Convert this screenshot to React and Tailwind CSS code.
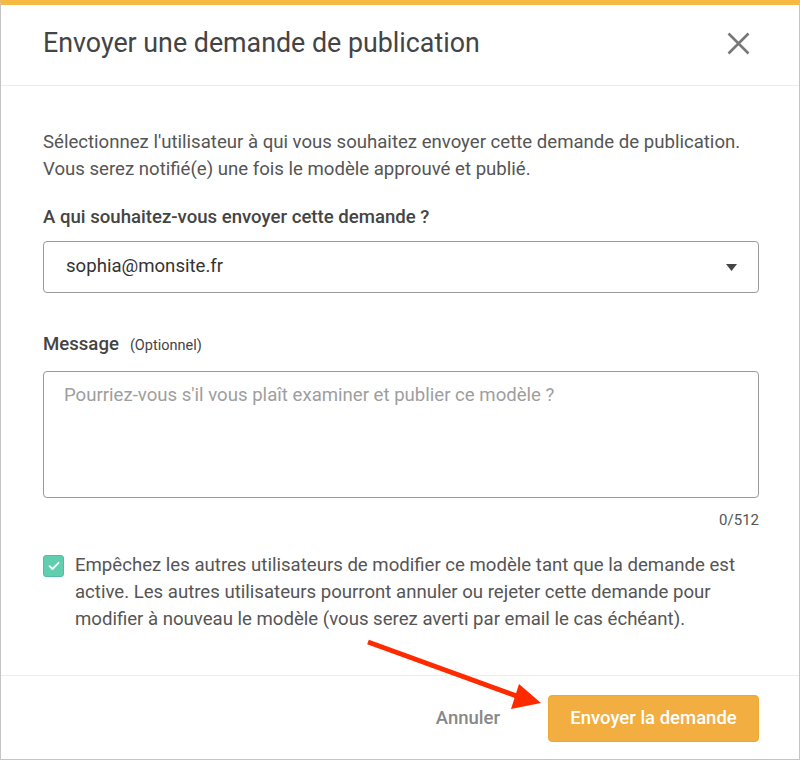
import { useState } from 'react'

export default function App() {
  const [locked, setLocked] = useState(true)
  const [message, setMessage] = useState('')

  return (
    <div className="relative w-[800px] h-[760px] bg-white border-x border-b border-[#c4c4c4] border-t-[5px] border-t-[#f6b942] font-['Roboto',sans-serif] flex flex-col">
      {/* Header */}
      <div className="h-[81px] shrink-0 flex items-center justify-between pl-[42px] pr-[49px] border-b border-[#ececec]">
        <h1 className="text-[26.8px] text-[#444] leading-none -mt-[4px]">Envoyer une demande de publication</h1>
        <button className="text-[#777] -mt-[4px]">
          <svg width="23" height="23" viewBox="0 0 23 23" fill="none" stroke="currentColor" strokeWidth="2.6">
            <path d="M1.5 1.5 L21.5 21.5 M21.5 1.5 L1.5 21.5" />
          </svg>
        </button>
      </div>

      {/* Body */}
      <div className="flex-1 px-[42px] pt-[43px] text-[18.6px]">
        <p className="text-[#555] leading-[27px]">
          Sélectionnez l'utilisateur à qui vous souhaitez envoyer cette demande de publication.
          <br />
          Vous serez notifié(e) une fois le modèle approuvé et publié.
        </p>

        <label className="block mt-[22px] leading-[24px] font-medium text-[#444]">
          A qui souhaitez-vous envoyer cette demande ?
        </label>
        <div className="mt-[12px] h-[52px] w-[716px] rounded-[4px] border border-[#9a9a9a] flex items-center justify-between pl-[22px] pr-[21px] text-[#333]">
          <span>sophia@monsite.fr</span>
          <svg width="11" height="7" viewBox="0 0 11 7" fill="#444">
            <path d="M0 0 H11 L5.5 7 Z" />
          </svg>
        </div>

        <div className="mt-[39px] flex items-baseline gap-[11px] leading-[24px]">
          <span className="font-medium text-[#444]">Message</span>
          <span className="text-[14.5px] text-[#444]">(Optionnel)</span>
        </div>
        <textarea
          value={message}
          onChange={(e) => setMessage(e.target.value)}
          placeholder="Pourriez-vous s'il vous plaît examiner et publier ce modèle ?"
          className="mt-[13px] block w-[716px] h-[127px] resize-none rounded-[4px] border border-[#9a9a9a] px-[20px] py-[11px] leading-[24px] text-[#333] placeholder-[#9e9e9e] outline-none"
        />
        <div className="w-[716px] text-right text-[15px] leading-[18px] mt-[13px] text-[#555]">{message.length}/512</div>

        <div className="mt-[23px] flex items-start gap-[11px]">
          <button
            onClick={() => setLocked(!locked)}
            className={`mt-[3px] shrink-0 w-[21px] h-[22px] rounded-[3px] flex items-center justify-center border ${locked ? 'bg-[#5fcfb0] border-[#4fbf9f]' : 'bg-white border-[#999]'}`}
          >
            {locked && (
              <svg width="12" height="10" viewBox="0 0 12 10" fill="none" stroke="white" strokeWidth="1.8" strokeLinecap="round" strokeLinejoin="round">
                <path d="M1.5 5.2 L4.5 8 L10.5 1.8" />
              </svg>
            )}
          </button>
          <p className="text-[#555] leading-[27px] w-[683px]">
            Empêchez les autres utilisateurs de modifier ce modèle tant que la demande est active. Les autres utilisateurs pourront annuler ou rejeter cette demande pour modifier à nouveau le modèle (vous serez averti par email le cas échéant).
          </p>
        </div>
      </div>

      {/* Footer */}
      <div className="h-[84px] shrink-0 border-t border-[#ececec] flex items-center justify-end gap-[48px] pr-[40px] pt-[2px]">
        <button className="text-[18.5px] font-medium text-[#888]">Annuler</button>
        <button className="h-[47px] w-[211px] rounded-[4px] bg-[#f2ae40] border border-[#f0a830] text-white text-[18.5px] font-medium">
          Envoyer la demande
        </button>
      </div>

      {/* Annotation arrow */}
      <svg className="absolute left-[-1px] top-[-5px] pointer-events-none" width="800" height="760" viewBox="0 0 800 760">
        <line x1="368" y1="642" x2="522" y2="698" stroke="#ff2a00" strokeWidth="5" />
        <polygon points="541,703 519,684 511,709" fill="#ff2a00" />
      </svg>
    </div>
  )
}
